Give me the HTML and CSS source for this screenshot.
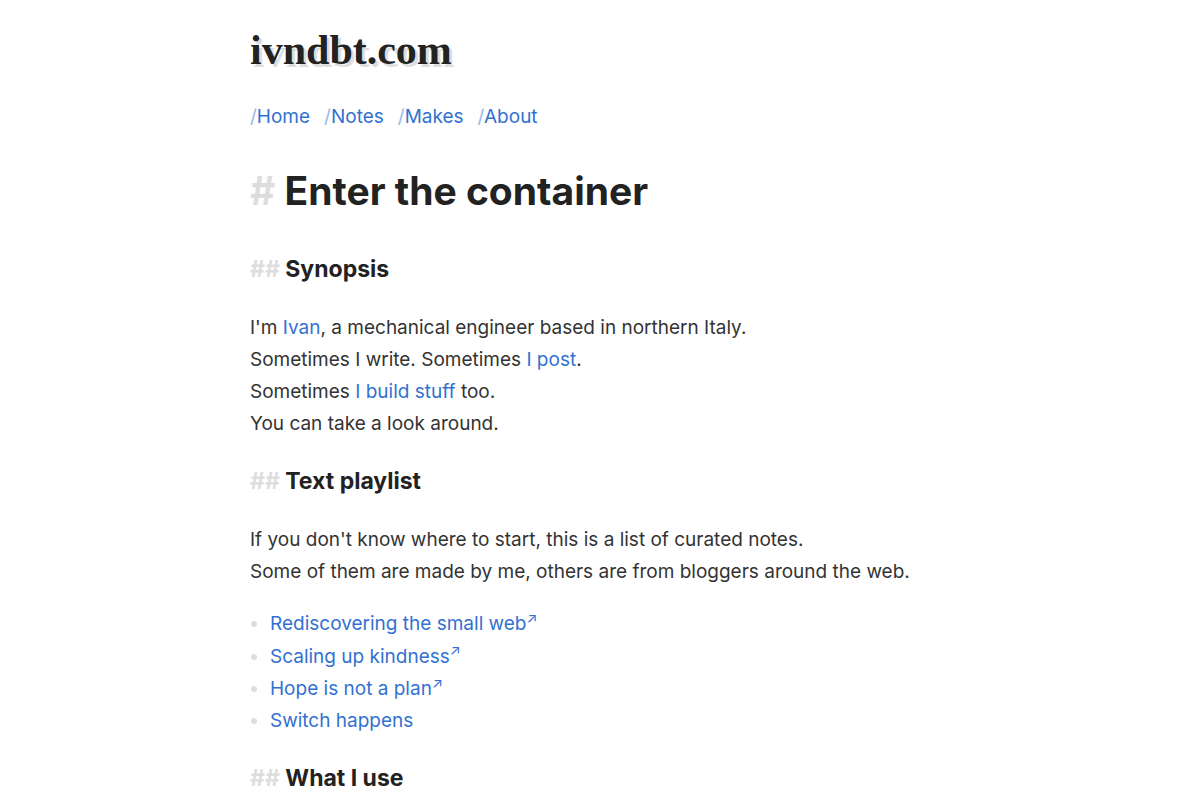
FILE: index.html
```html
<!DOCTYPE html>
<html lang="en">
<head>
    <meta charset="UTF-8">
    <meta name="viewport" content="width=device-width, initial-scale=1.0">
    <title>ivndbt.com</title>
    <link rel="stylesheet" href="styles.css">
</head>
<body>
    <header>
        <a class="logo" href="/">ivndbt.com</a>
        <nav>
            <a href="/">Home</a>
            <a href="/notes">Notes</a>
            <a href="/makes">Makes</a>
            <a href="/about">About</a>
        </nav>
    </header>

    <main>
        <h1>Enter the container</h1>

        <h2>Synopsis</h2>
        <p>
            I'm <a href="/about">Ivan</a>, a mechanical engineer based in northern Italy.<br>
            Sometimes I write. Sometimes <a href="/notes">I post</a>.<br>
            Sometimes <a href="/makes">I build stuff</a> too.<br>
            You can take a look around.
        </p>

        <h2>Text playlist</h2>
        <p>
            If you don't know where to start, this is a list of curated notes.<br>
            Some of them are made by me, others are from bloggers around the web.
        </p>
        <ul>
            <li><a class="external" href="#small-web">Rediscovering the small web</a></li>
            <li><a class="external" href="#kindness">Scaling up kindness</a></li>
            <li><a class="external" href="#hope">Hope is not a plan</a></li>
            <li><a href="/notes/switch-happens">Switch happens</a></li>
        </ul>

        <h2>What I use</h2>
    </main>
</body>
</html>
```
FILE: styles.css
```css
* {
    box-sizing: border-box;
}

body {
    max-width: 740px;
    margin: 0 auto;
    padding: 24px 20px 0;
    background: #fff;
    color: #333;
    font-family: Inter, sans-serif;
    font-size: 19px;
    line-height: 32px;
}

a {
    color: #3271d1;
    text-decoration: none;
}

.logo {
    display: block;
    color: #222;
    font-family: "Liberation Serif", serif;
    font-size: 42px;
    font-weight: bold;
    line-height: 52px;
    text-shadow: 3px 3px #ddd;
}

nav {
    display: flex;
    gap: 14px;
    margin-top: 25px;
}

nav a::before {
    content: "/";
    opacity: 0.5;
}

h1, h2 {
    color: #222;
    font-weight: bold;
}

h1 {
    margin: 34px 0 40px;
    font-size: 39px;
    line-height: 48px;
}

h2 {
    margin: 27px 0 28px;
    font-size: 23px;
    line-height: 29px;
}

h1::before, h2::before {
    color: #ddd;
}

h1::before {
    content: "# ";
}

h2::before {
    content: "## ";
}

p {
    margin: 20px 0;
}

ul {
    margin: 20px 0;
    padding-left: 20px;
}

li::marker {
    color: #ddd;
}

.external::after {
    content: "↗";
    font-size: 14px;
    vertical-align: super;
    line-height: 20px;
}
```
